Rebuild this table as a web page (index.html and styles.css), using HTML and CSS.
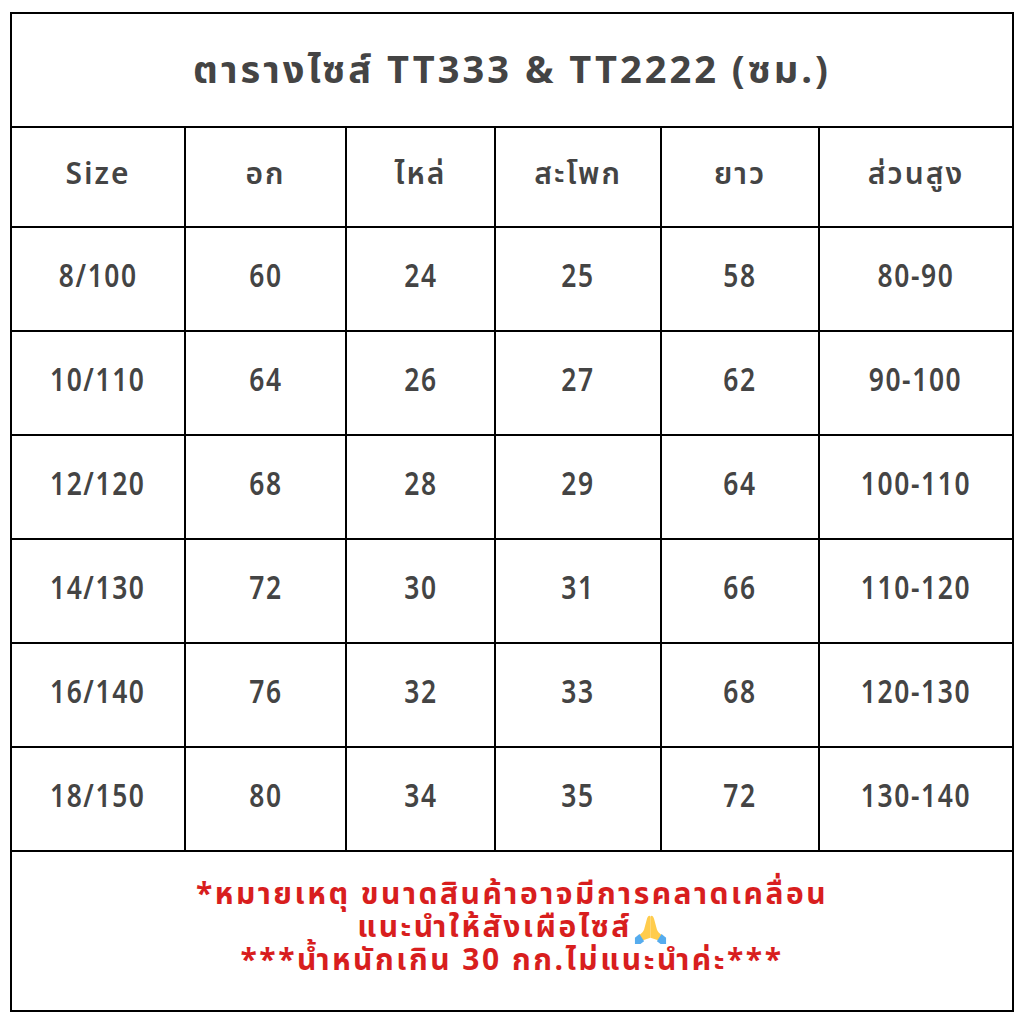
FILE: index.html
```html
<!DOCTYPE html>
<html lang="th">
<head>
<meta charset="utf-8">
<title>ตารางไซส์</title>
<link rel="stylesheet" href="styles.css">
</head>
<body>
<div class="table">
  <div class="cell title">ตารางไซส์ TT333 &amp; TT2222 (ซม.)</div>

  <div class="cell head">Size</div>
  <div class="cell head">อก</div>
  <div class="cell head">ไหล่</div>
  <div class="cell head">สะโพก</div>
  <div class="cell head">ยาว</div>
  <div class="cell head">ส่วนสูง</div>

  <div class="cell"><span class="num">8/100</span></div><div class="cell"><span class="num">60</span></div><div class="cell"><span class="num">24</span></div><div class="cell"><span class="num">25</span></div><div class="cell"><span class="num">58</span></div><div class="cell"><span class="num">80-90</span></div>
  <div class="cell"><span class="num">10/110</span></div><div class="cell"><span class="num">64</span></div><div class="cell"><span class="num">26</span></div><div class="cell"><span class="num">27</span></div><div class="cell"><span class="num">62</span></div><div class="cell"><span class="num">90-100</span></div>
  <div class="cell"><span class="num">12/120</span></div><div class="cell"><span class="num">68</span></div><div class="cell"><span class="num">28</span></div><div class="cell"><span class="num">29</span></div><div class="cell"><span class="num">64</span></div><div class="cell"><span class="num">100-110</span></div>
  <div class="cell"><span class="num">14/130</span></div><div class="cell"><span class="num">72</span></div><div class="cell"><span class="num">30</span></div><div class="cell"><span class="num">31</span></div><div class="cell"><span class="num">66</span></div><div class="cell"><span class="num">110-120</span></div>
  <div class="cell"><span class="num">16/140</span></div><div class="cell"><span class="num">76</span></div><div class="cell"><span class="num">32</span></div><div class="cell"><span class="num">33</span></div><div class="cell"><span class="num">68</span></div><div class="cell"><span class="num">120-130</span></div>
  <div class="cell"><span class="num">18/150</span></div><div class="cell"><span class="num">80</span></div><div class="cell"><span class="num">34</span></div><div class="cell"><span class="num">35</span></div><div class="cell"><span class="num">72</span></div><div class="cell"><span class="num">130-140</span></div>

  <div class="cell note">
    <p class="note-line">*หมายเหตุ ขนาดสินค้าอาจมีการคลาดเคลื่อน</p>
    <p class="note-line">แนะนำให้สังเผือไซส์<svg class="pray" viewBox="0 0 36 36" aria-hidden="true"><path d="M17 4c-1.5 0-2.5 1.5-3 4l-3 11c-0.7 2.6-3 4-5 6l3 6 9-3V6c0-1.2-0.4-2-1-2z" fill="#ffcc4d"/><path d="M19 4c1.5 0 2.5 1.5 3 4l3 11c0.7 2.6 3 4 5 6l-3 6-9-3V6c0-1.2 0.4-2 1-2z" fill="#ffcc4d"/><path d="M1 28l5-4 5 8-4 3H1z" fill="#55acee"/><path d="M35 28l-5-4-5 8 4 3h6z" fill="#55acee"/></svg></p>
    <p class="note-line">***น้ำหนักเกิน 30 กก.ไม่แนะนำค่ะ***</p>
  </div>
</div>
</body>
</html>
```
FILE: styles.css
```css
html, body {
  margin: 0;
  padding: 0;
  background: #ffffff;
}
body {
  padding: 12px 10px;
  font-family: "Noto Sans Thai", "Noto Sans", "DejaVu Sans", sans-serif;
  color: #444444;
}
.table {
  width: 1004px;
  box-sizing: border-box;
  background: #000000;
  padding: 2px;
  display: grid;
  grid-template-columns: 172px 159px 147px 164px 156px 192px;
  grid-template-rows: 112px 98px repeat(6, 102px) 158px;
  gap: 2px;
}
.cell {
  background: #ffffff;
  display: flex;
  align-items: center;
  justify-content: center;
  font-size: 31px;
  font-weight: 700;
}
.num {
  display: inline-block;
  font-size: 33px;
  font-weight: 600;
  letter-spacing: 2px;
  transform: scaleX(0.8);
  margin-top: -4px;
}
.title {
  grid-column: 1 / -1;
  font-size: 38px;
  letter-spacing: 3px;
  padding-top: 2px;
}
.head {
  font-size: 30px;
  font-weight: 600;
  letter-spacing: 2px;
  padding-bottom: 4px;
}
.note {
  grid-column: 1 / -1;
  flex-direction: column;
  justify-content: flex-start;
  padding-top: 27px;
  color: #d81e1e;
  font-size: 30px;
  letter-spacing: 2.5px;
}
.note-line {
  margin: 0;
  line-height: 33px;
  display: flex;
  align-items: flex-end;
}
.pray {
  width: 33px;
  height: 33px;
  margin-left: 2px;
}
```
